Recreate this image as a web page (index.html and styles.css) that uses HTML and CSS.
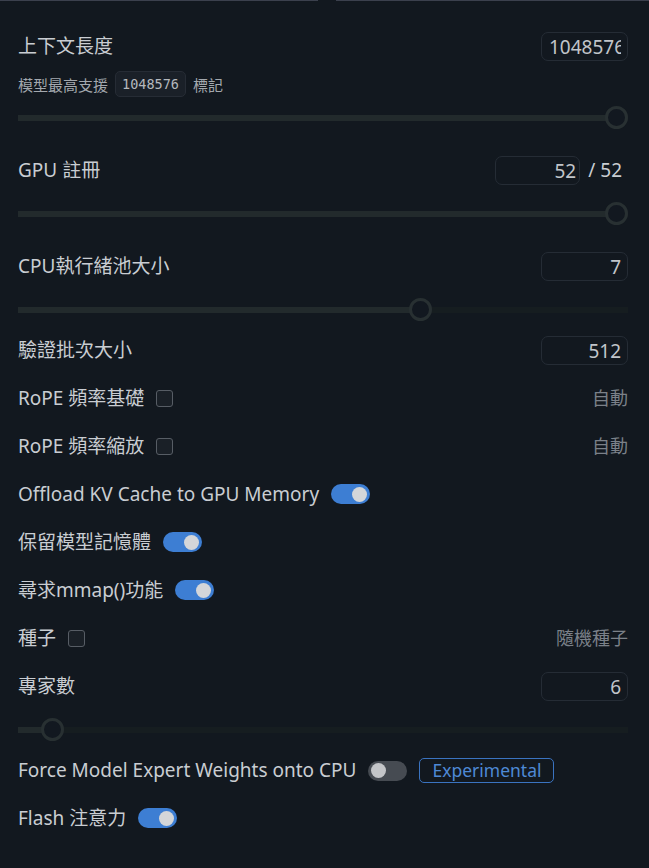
FILE: index.html
```html
<!DOCTYPE html>
<html lang="zh-Hant">
<head>
    <meta charset="UTF-8">
    <meta name="viewport" content="width=device-width, initial-scale=1.0">
    <title>模型載入設定</title>
    <link rel="stylesheet" href="styles.css">
</head>
<body>
    <!-- Top edge of the popover, with the pointer notch -->
    <div class="top-line">
        <span class="top-seg top-seg-left"></span>
        <span class="top-seg top-seg-right"></span>
    </div>

    <main class="settings">
        <!-- Context length -->
        <div class="row first">
            <span class="label">上下文長度</span>
            <input class="num-input" type="text" value="1048576">
        </div>
        <div class="hint">模型最高支援 <code class="token-badge">1048576</code> 標記</div>
        <div class="slider after-hint" style="--p: 1">
            <div class="track"><div class="fill"></div></div>
            <div class="thumb"></div>
        </div>

        <!-- GPU offload -->
        <div class="row section">
            <span class="label">GPU 註冊</span>
            <div class="value-group">
                <input class="num-input short" type="text" value="52">
                <span class="label">/ 52</span>
            </div>
        </div>
        <div class="slider" style="--p: 1">
            <div class="track"><div class="fill"></div></div>
            <div class="thumb"></div>
        </div>

        <!-- CPU threads -->
        <div class="row section">
            <span class="label">CPU執行緒池大小</span>
            <input class="num-input" type="text" value="7">
        </div>
        <div class="slider" style="--p: 0.667">
            <div class="track"><div class="fill"></div></div>
            <div class="thumb"></div>
        </div>

        <div class="row after-slider">
            <span class="label">驗證批次大小</span>
            <input class="num-input" type="text" value="512">
        </div>

        <div class="row">
            <div class="label-group">
                <span class="label">RoPE 頻率基礎</span>
                <span class="checkbox"></span>
            </div>
            <span class="auto-text">自動</span>
        </div>

        <div class="row">
            <div class="label-group">
                <span class="label">RoPE 頻率縮放</span>
                <span class="checkbox"></span>
            </div>
            <span class="auto-text">自動</span>
        </div>

        <div class="row">
            <div class="label-group">
                <span class="label">Offload KV Cache to GPU Memory</span>
                <span class="toggle on"></span>
            </div>
        </div>

        <div class="row">
            <div class="label-group">
                <span class="label">保留模型記憶體</span>
                <span class="toggle on"></span>
            </div>
        </div>

        <div class="row">
            <div class="label-group">
                <span class="label">尋求mmap()功能</span>
                <span class="toggle on"></span>
            </div>
        </div>

        <div class="row">
            <div class="label-group">
                <span class="label">種子</span>
                <span class="checkbox"></span>
            </div>
            <span class="auto-text">隨機種子</span>
        </div>

        <!-- Experts -->
        <div class="row">
            <span class="label">專家數</span>
            <input class="num-input" type="text" value="6">
        </div>
        <div class="slider" style="--p: 0.039">
            <div class="track"><div class="fill"></div></div>
            <div class="thumb"></div>
        </div>

        <div class="row after-slider">
            <div class="label-group">
                <span class="label">Force Model Expert Weights onto CPU</span>
                <span class="toggle"></span>
                <span class="tag">Experimental</span>
            </div>
        </div>

        <div class="row">
            <div class="label-group">
                <span class="label">Flash 注意力</span>
                <span class="toggle on"></span>
            </div>
        </div>
    </main>
</body>
</html>
```

FILE: styles.css
```css
body {
    font-family: "Noto Sans", "Noto Sans CJK TC", sans-serif;
    margin: 0;
    padding: 0;
    background-color: #12181f;
    color: #c9cdd2;
}

.top-line {
    display: flex;
    height: 1px;
}

.top-seg {
    background-color: #3b404d;
}

.top-seg-left {
    width: 318px;
}

.top-seg-right {
    flex: 1;
    margin-left: 18px;
}

.settings {
    display: flex;
    flex-direction: column;
    padding: 0 21px 40px 18px;
}

.row {
    display: flex;
    align-items: center;
    justify-content: space-between;
    height: 29px;
    margin-top: 19px;
}

.row.first {
    margin-top: 31px;
}

.row.section {
    margin-top: 27px;
}

.row.after-slider {
    margin-top: 15px;
}

.label {
    font-size: 19px;
    line-height: 1.2;
    white-space: nowrap;
}

.label-group {
    display: flex;
    align-items: center;
    gap: 12px;
}

.value-group {
    display: flex;
    align-items: center;
    gap: 8px;
    padding-right: 6px;
}

.num-input {
    box-sizing: border-box;
    width: 87px;
    height: 29px;
    padding: 0 6px 0 7px;
    border: 1px solid #252c35;
    border-radius: 7px;
    background: transparent;
    color: #c1c5ca;
    font-family: "Noto Sans", sans-serif;
    font-size: 19px;
    text-align: right;
    outline: none;
}

.num-input.short {
    width: 85px;
    padding-right: 3px;
}

.hint {
    display: flex;
    align-items: center;
    gap: 7px;
    margin-top: 10px;
    height: 26px;
    font-size: 15px;
    color: #a3a8ae;
}

.token-badge {
    display: inline-flex;
    align-items: center;
    box-sizing: border-box;
    height: 26px;
    padding: 0 6px;
    border: 1px solid #262c35;
    border-radius: 5px;
    background-color: #1a2028;
    font-family: "DejaVu Sans Mono", monospace;
    font-size: 13.5px;
    color: #b4b8bd;
}

/* Range slider drawn with divs, --p is the value from 0 to 1 */
.slider {
    position: relative;
    display: flex;
    align-items: center;
    height: 23px;
    margin-top: 17px;
}

.slider.after-hint {
    margin-top: 9px;
}

.track {
    width: 100%;
    height: 6px;
    background-color: #161d20;
}

.fill {
    height: 100%;
    width: calc(12px + (100% - 24px) * var(--p));
    background-color: #222a2c;
}

.thumb {
    position: absolute;
    top: 0;
    left: calc(12px + (100% - 24px) * var(--p));
    box-sizing: border-box;
    width: 23px;
    height: 23px;
    margin-left: -11.5px;
    border: 3px solid #283032;
    border-radius: 50%;
    background-color: #121820;
}

.checkbox {
    box-sizing: border-box;
    width: 17px;
    height: 17px;
    border: 1.5px solid #575d65;
    border-radius: 3px;
    background-color: #1a2027;
}

.auto-text {
    font-size: 18px;
    line-height: 1.2;
    color: #7b8189;
}

.toggle {
    position: relative;
    width: 39px;
    height: 20px;
    border-radius: 10px;
    background-color: #464b52;
}

.toggle::after {
    content: "";
    position: absolute;
    top: 2.5px;
    left: 3px;
    width: 15px;
    height: 15px;
    border-radius: 50%;
    background-color: #c3c5c8;
}

.toggle.on {
    background-color: #3d7ed3;
}

.toggle.on::after {
    left: auto;
    right: 3px;
    background-color: #d4d6d9;
}

.tag {
    box-sizing: border-box;
    height: 25px;
    padding: 0 12px;
    border: 1px solid #3a73c0;
    border-radius: 5px;
    color: #4e89d5;
    font-size: 17.5px;
    line-height: 23px;
}
```
